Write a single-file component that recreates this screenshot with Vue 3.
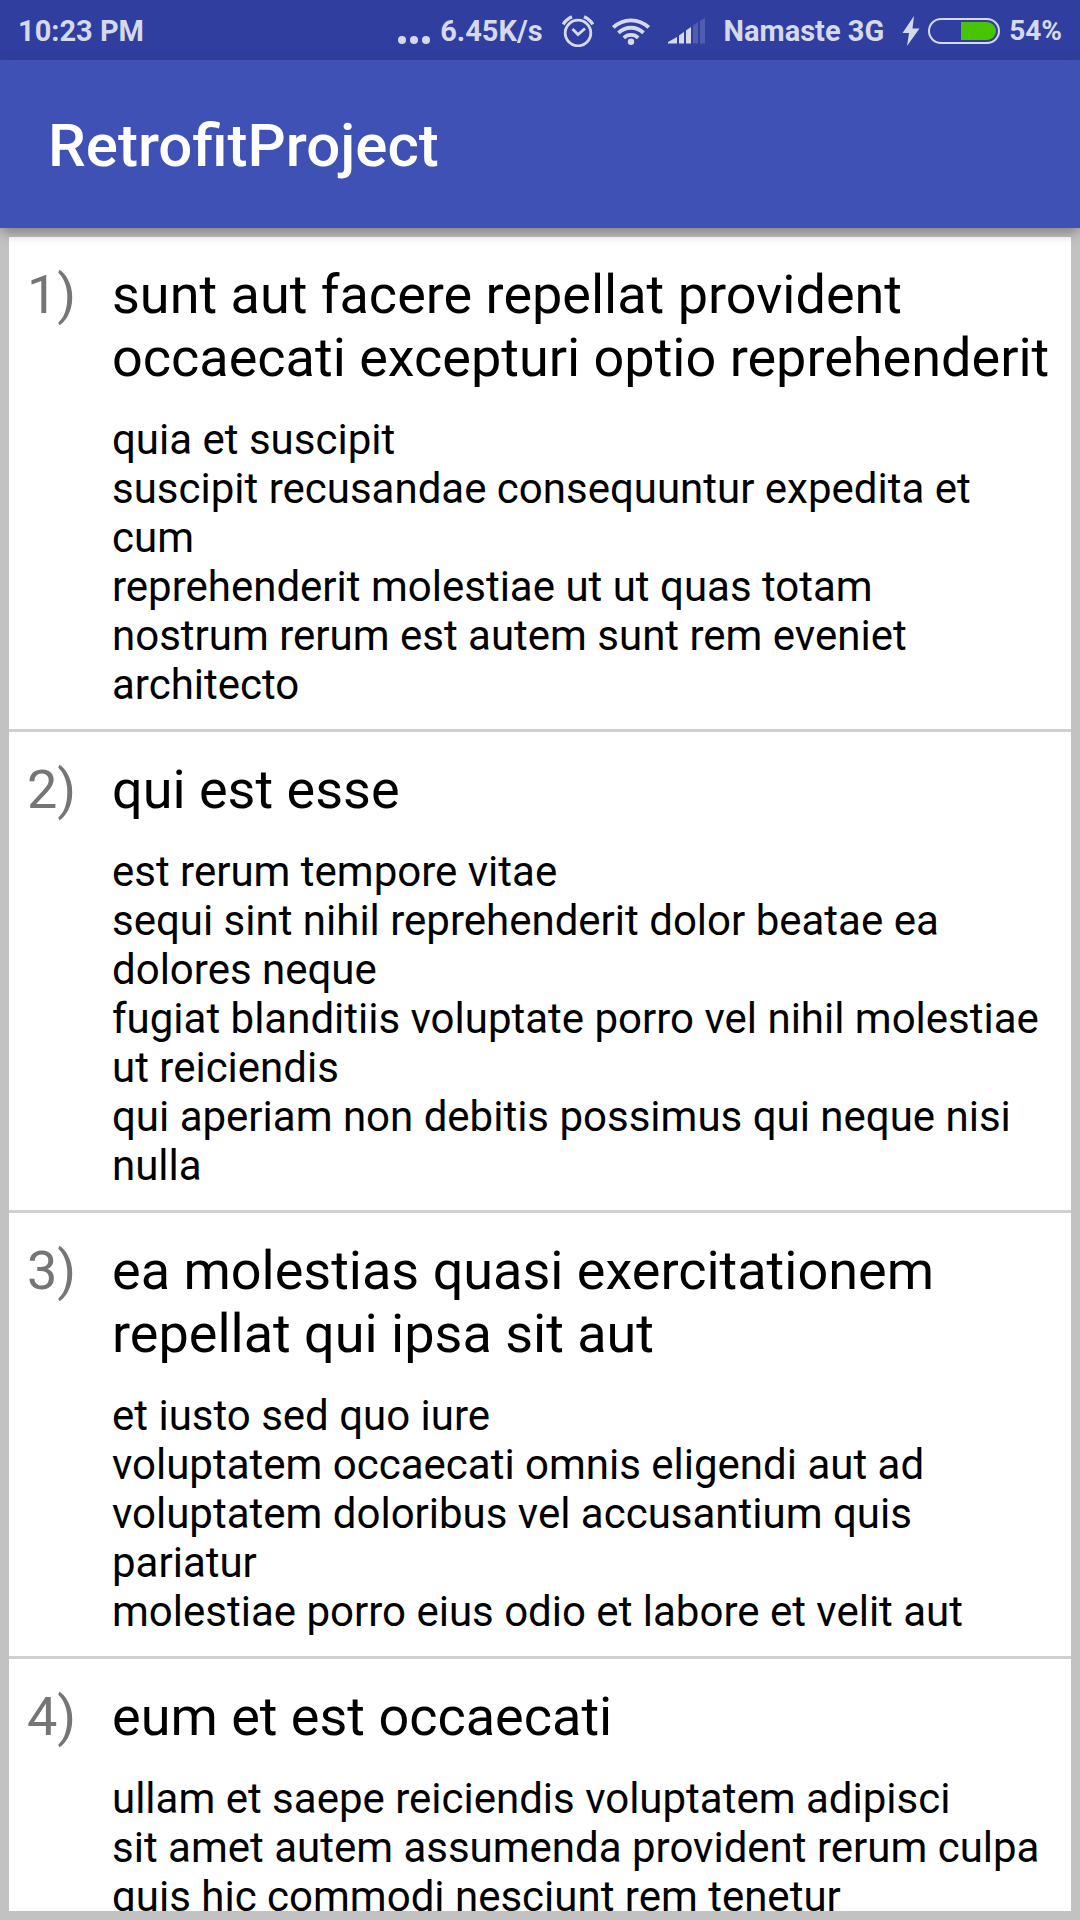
<script setup>
const posts = [
  { id: 1, title: 'sunt aut facere repellat provident occaecati excepturi optio reprehenderit', body: 'quia et suscipit\nsuscipit recusandae consequuntur expedita et cum\nreprehenderit molestiae ut ut quas totam\nnostrum rerum est autem sunt rem eveniet architecto' },
  { id: 2, title: 'qui est esse', body: 'est rerum tempore vitae\nsequi sint nihil reprehenderit dolor beatae ea dolores neque\nfugiat blanditiis voluptate porro vel nihil molestiae ut reiciendis\nqui aperiam non debitis possimus qui neque nisi nulla' },
  { id: 3, title: 'ea molestias quasi exercitationem repellat qui ipsa sit aut', body: 'et iusto sed quo iure\nvoluptatem occaecati omnis eligendi aut ad\nvoluptatem doloribus vel accusantium quis pariatur\nmolestiae porro eius odio et labore et velit aut' },
  { id: 4, title: 'eum et est occaecati', body: 'ullam et saepe reiciendis voluptatem adipisci\nsit amet autem assumenda provident rerum culpa\nquis hic commodi nesciunt rem tenetur' }
]
</script>

<template>
  <div class="screen">
    <div class="status">
      <span>10:23 PM</span>
      <div class="right">
        <span class="dots"><i></i><i></i><i></i></span>
        <span class="speed">6.45K/s</span>
        <svg class="icon" width="32" height="32" viewBox="0 0 32 32" fill="none" stroke="currentColor" stroke-width="2.8"><circle cx="16" cy="18" r="12.800"/><path d="M10.500 14l5.500 5.500 7-6"/><path d="M1.200 9.500Q4 4.500 10 1.800M30.800 9.500Q28 4.500 22 1.800" stroke-width="3.400"/></svg>
        <svg class="icon" width="38" height="28" viewBox="0 0 38 28" fill="none" stroke="currentColor" stroke-width="3.800"><path d="M1.300 10.500a25.500 25.500 0 0 1 35.400 0M6.500 15.800a18 18 0 0 1 25 0M11.800 20.800a10.500 10.500 0 0 1 14.400 0"/><circle cx="19" cy="24.800" r="3.200" fill="currentColor" stroke="none"/></svg>
        <svg class="icon" width="37" height="26" viewBox="0 0 37 26" fill="currentColor"><path d="M0 25.500V24l9-5v6.500zM11 17.500l5-3.500v11.500h-5zM18 12.500l5-3.500v16.500h-5z"/><path opacity=".2" d="M25 7.500l5-3.500v21.500h-5zM32 3l5-3v25.500h-5z"/></svg>
        <span class="carrier">Namaste 3G</span>
        <svg class="icon" width="18" height="30" viewBox="0 0 18 30" fill="currentColor"><path d="M12 0 .5 17h6.500L5 30 17.500 12.500h-7z"/></svg>
        <svg class="battery" width="72" height="26" viewBox="0 0 72 26"><rect x="1" y="1" width="70" height="24" rx="12" fill="none" stroke="currentColor" stroke-width="2"/><path d="M33 4h26a9 9 0 0 1 0 18H33z" fill="#48c400"/></svg>
        <span class="percent">54%</span>
      </div>
    </div>
    <header class="bar"><h1>RetrofitProject</h1></header>
    <main class="list">
      <article v-for="p in posts" :key="p.id" class="row">
        <span class="num">{{ p.id }})</span>
        <div class="text">
          <h2>{{ p.title }}</h2>
          <p>{{ p.body }}</p>
        </div>
      </article>
    </main>
  </div>
</template>

<style>
body { margin: 0; }
</style>

<style scoped>
.screen { height: 100vh; display: flex; flex-direction: column; overflow: hidden; background: #c2c2c2; font-family: Roboto, sans-serif; }
.status { flex: none; height: 60px; box-sizing: border-box; padding: 1px 18px 0; background: #303f9f; color: #d6d9ec; display: flex; align-items: center; justify-content: space-between; font-size: 29px; font-weight: 700; white-space: nowrap; }
.right { display: flex; align-items: center; }
.right svg { flex: none; }
.dots { display: flex; gap: 4px; margin: 18px 10px 0 0; }
.dots i { width: 8px; height: 8px; border-radius: 50%; background: currentColor; }
.speed { margin-right: 1px; }
.icon { margin-left: 18px; }
.carrier { margin-left: 19px; }
.battery { margin: 0 9px 0 8px; }
.percent { font-size: 28px; }
.bar { position: relative; flex: none; height: 168px; box-sizing: border-box; display: flex; align-items: center; padding: 4px 48px 0; background: #3f51b5; color: #fff; box-shadow: 0 5px 12px -1px rgba(0, 0, 0, .36); }
h1 { margin: 0; font-size: 60px; font-weight: 500; line-height: 70px; }
.list { flex: 1; min-height: 0; overflow: hidden; margin: 9px; background: #fff; }
.row { display: flex; padding: 26px 18px 20px; border-bottom: 3px solid #d0d0d0; }
.num { flex: none; width: 85px; font-size: 54px; line-height: 63px; color: #757575; }
.text { flex: 1; min-width: 0; color: #000; }
h2 { margin: 0 0 26px; font-size: 54px; line-height: 63px; font-weight: 400; }
p { margin: 0; font-size: 42px; line-height: 49px; white-space: pre-line; }
</style>
